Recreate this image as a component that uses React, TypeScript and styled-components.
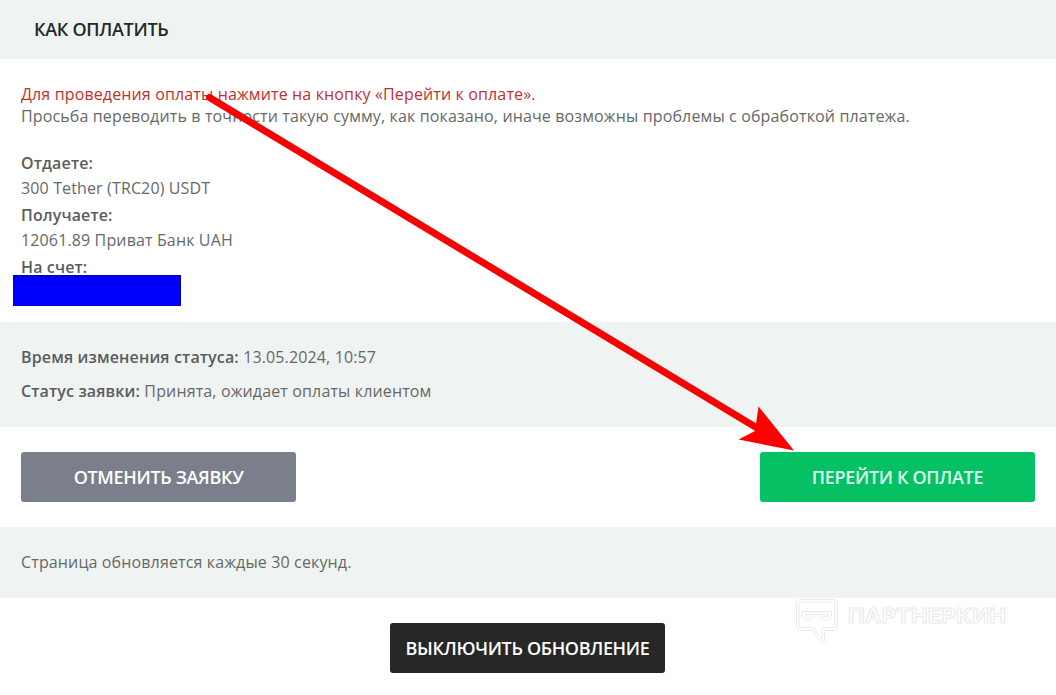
import styled, { createGlobalStyle } from 'styled-components';

const GlobalStyle = createGlobalStyle`
  * {
    box-sizing: border-box;
  }

  body {
    margin: 0;
    background: #fff;
    color: #666968;
    font-family: 'Open Sans', 'Noto Sans', sans-serif;
    font-size: 16px;
    letter-spacing: 0.135px;
    overflow: hidden;
  }
`;

const ORDER_FIELDS = [
  { label: 'Отдаете:', value: '300 Tether (TRC20) USDT' },
  { label: 'Получаете:', value: '12061.89 Приват Банк UAH' },
];

function PaymentArrow() {
  return (
    <ArrowSvg viewBox="0 0 1056 695" aria-hidden="true">
      <path d="M209.500 97.500 L762 431" stroke="#f40404" strokeWidth="7" strokeLinecap="round" />
      <path d="M794 450.5 L738.5 439.5 L755 431 L758.5 406.5 Z" fill="#ff0000" />
    </ArrowSvg>
  );
}

function Watermark() {
  return (
    <WatermarkSvg viewBox="0 0 212 48" fill="none" stroke="#e9eaea" aria-hidden="true">
      <path d="M4 0.500 H38 Q41.500 0.500 41.500 4 V28 Q41.500 31.500 38 31.500 H28.500 V42 Q27.500 44.500 25 43 Q20 38 16 31.500 H4 Q0.500 31.500 0.500 28 V4 Q0.500 0.500 4 0.500 Z" />
      <path d="M5 3 H37 Q39 3 39 5 V26.500 Q39 28.500 37 28.500 H26 V40 Q21 35 17.500 28.500 H5 Q3 28.500 3 26.500 V5 Q3 3 5 3 Z" />
      <path d="M6.500 12.500 H35.500 V16 Q35 21.500 29.500 21.500 Q24 21.500 24 15.500 H18 Q18 21.500 12.500 21.500 Q7 21.500 6.500 16 Z M10 15.500 H15 V17 Q12.500 20 10 17 Z M27 15.500 H32 V17 Q29.500 20 27 17 Z" />
      <Wordmark x="52" y="23.500" textLength="158" lengthAdjust="spacingAndGlyphs">
        ПАРТНЕРКИН
      </Wordmark>
    </WatermarkSvg>
  );
}

function App() {
  return (
    <Page>
      <GlobalStyle />

      <Header>
        <Heading>КАК ОПЛАТИТЬ</Heading>
      </Header>

      <Details>
        <Notice $warning>Для проведения оплаты нажмите на кнопку «Перейти к оплате».</Notice>
        <Notice>
          Просьба переводить в точности такую сумму, как показано, иначе возможны проблемы с обработкой платежа.
        </Notice>

        <FieldList>
          {ORDER_FIELDS.map(({ label, value }) => (
            <Field key={label}>
              <Label>{label}</Label>
              <Value>{value}</Value>
            </Field>
          ))}
          <Field>
            <Label>На счет:</Label>
            <HiddenAccount />
          </Field>
        </FieldList>
      </Details>

      <StatusSection>
        <StatusRow>
          <strong>Время изменения статуса:</strong> 13.05.2024, 10:57
        </StatusRow>
        <StatusRow>
          <strong>Статус заявки:</strong> Принята, ожидает оплаты клиентом
        </StatusRow>
      </StatusSection>

      <Actions>
        <Button $color="#7b7f8b">ОТМЕНИТЬ ЗАЯВКУ</Button>
        <Button $color="#05c163" $text="#d9fff0">
          ПЕРЕЙТИ К ОПЛАТЕ
        </Button>
      </Actions>

      <RefreshInfo>Страница обновляется каждые 30 секунд.</RefreshInfo>

      <Footer>
        <Button $color="#252827">ВЫКЛЮЧИТЬ ОБНОВЛЕНИЕ</Button>
      </Footer>

      <Watermark />
      <PaymentArrow />
    </Page>
  );
}

export default App;

const Page = styled.main`
  position: relative;
  width: 1056px;
  height: 695px;
  overflow: hidden;
`;

const Header = styled.header`
  display: flex;
  align-items: center;
  height: 59px;
  padding: 0 34px 2px;
  background: #eff3f2;
`;

const Heading = styled.h1`
  margin: 0;
  color: #252827;
  font-size: 18px;
  font-weight: 600;
  letter-spacing: -0.3px;
  line-height: 24px;
`;

const Details = styled.section`
  height: 263px;
  padding: 24px 21px 0;
`;

const Notice = styled.p<{ $warning?: boolean }>`
  margin: 0;
  color: ${({ $warning }) => ($warning ? '#bf3030' : 'inherit')};
  line-height: 22px;
  white-space: nowrap;
`;

const FieldList = styled.div`
  display: flex;
  flex-direction: column;
  gap: 2px;
  margin-top: 24px;
`;

const Field = styled.div`
  display: flex;
  flex-direction: column;
`;

const Label = styled.strong`
  color: #5a5d5c;
  font-weight: 600;
  line-height: 24px;
`;

const Value = styled.span`
  line-height: 26px;
`;

const HiddenAccount = styled.div`
  z-index: 1;
  width: 168px;
  height: 31px;
  margin: -4px 0 0 -8px;
  border: 1px solid #0000b8;
  background: #0000ff;
`;

const StatusSection = styled.section`
  display: flex;
  flex-direction: column;
  gap: 10px;
  height: 105px;
  padding: 23px 21px;
  background: #eff3f2;
`;

const StatusRow = styled.p`
  margin: 0;
  line-height: 24px;

  strong {
    color: #5a5d5c;
    font-weight: 600;
  }
`;

const Actions = styled.section`
  display: flex;
  align-items: center;
  justify-content: space-between;
  height: 100px;
  padding: 0 21px;
`;

const Button = styled.button<{ $color: string; $text?: string }>`
  width: 275px;
  height: 50px;
  padding: 0;
  border: 0;
  border-radius: 3px;
  background: ${({ $color }) => $color};
  color: ${({ $text }) => $text ?? '#fff'};
  font-family: inherit;
  font-size: 18px;
  font-weight: 600;
  letter-spacing: -0.33px;
  white-space: nowrap;
`;

const RefreshInfo = styled.section`
  display: flex;
  align-items: center;
  height: 71px;
  padding: 0 21px 2px;
  background: #eff3f2;
`;

const Footer = styled.footer`
  display: flex;
  justify-content: center;
  padding: 25px 1px 0 0;
`;

const WatermarkSvg = styled.svg`
  position: absolute;
  top: 599px;
  left: 796px;
  width: 212px;
  height: 48px;
`;

const Wordmark = styled.text`
  font-family: Inter, sans-serif;
  font-size: 20px;
  font-weight: 700;
`;

const ArrowSvg = styled.svg`
  position: absolute;
  inset: 0;
  width: 1056px;
  height: 695px;
  pointer-events: none;
`;
